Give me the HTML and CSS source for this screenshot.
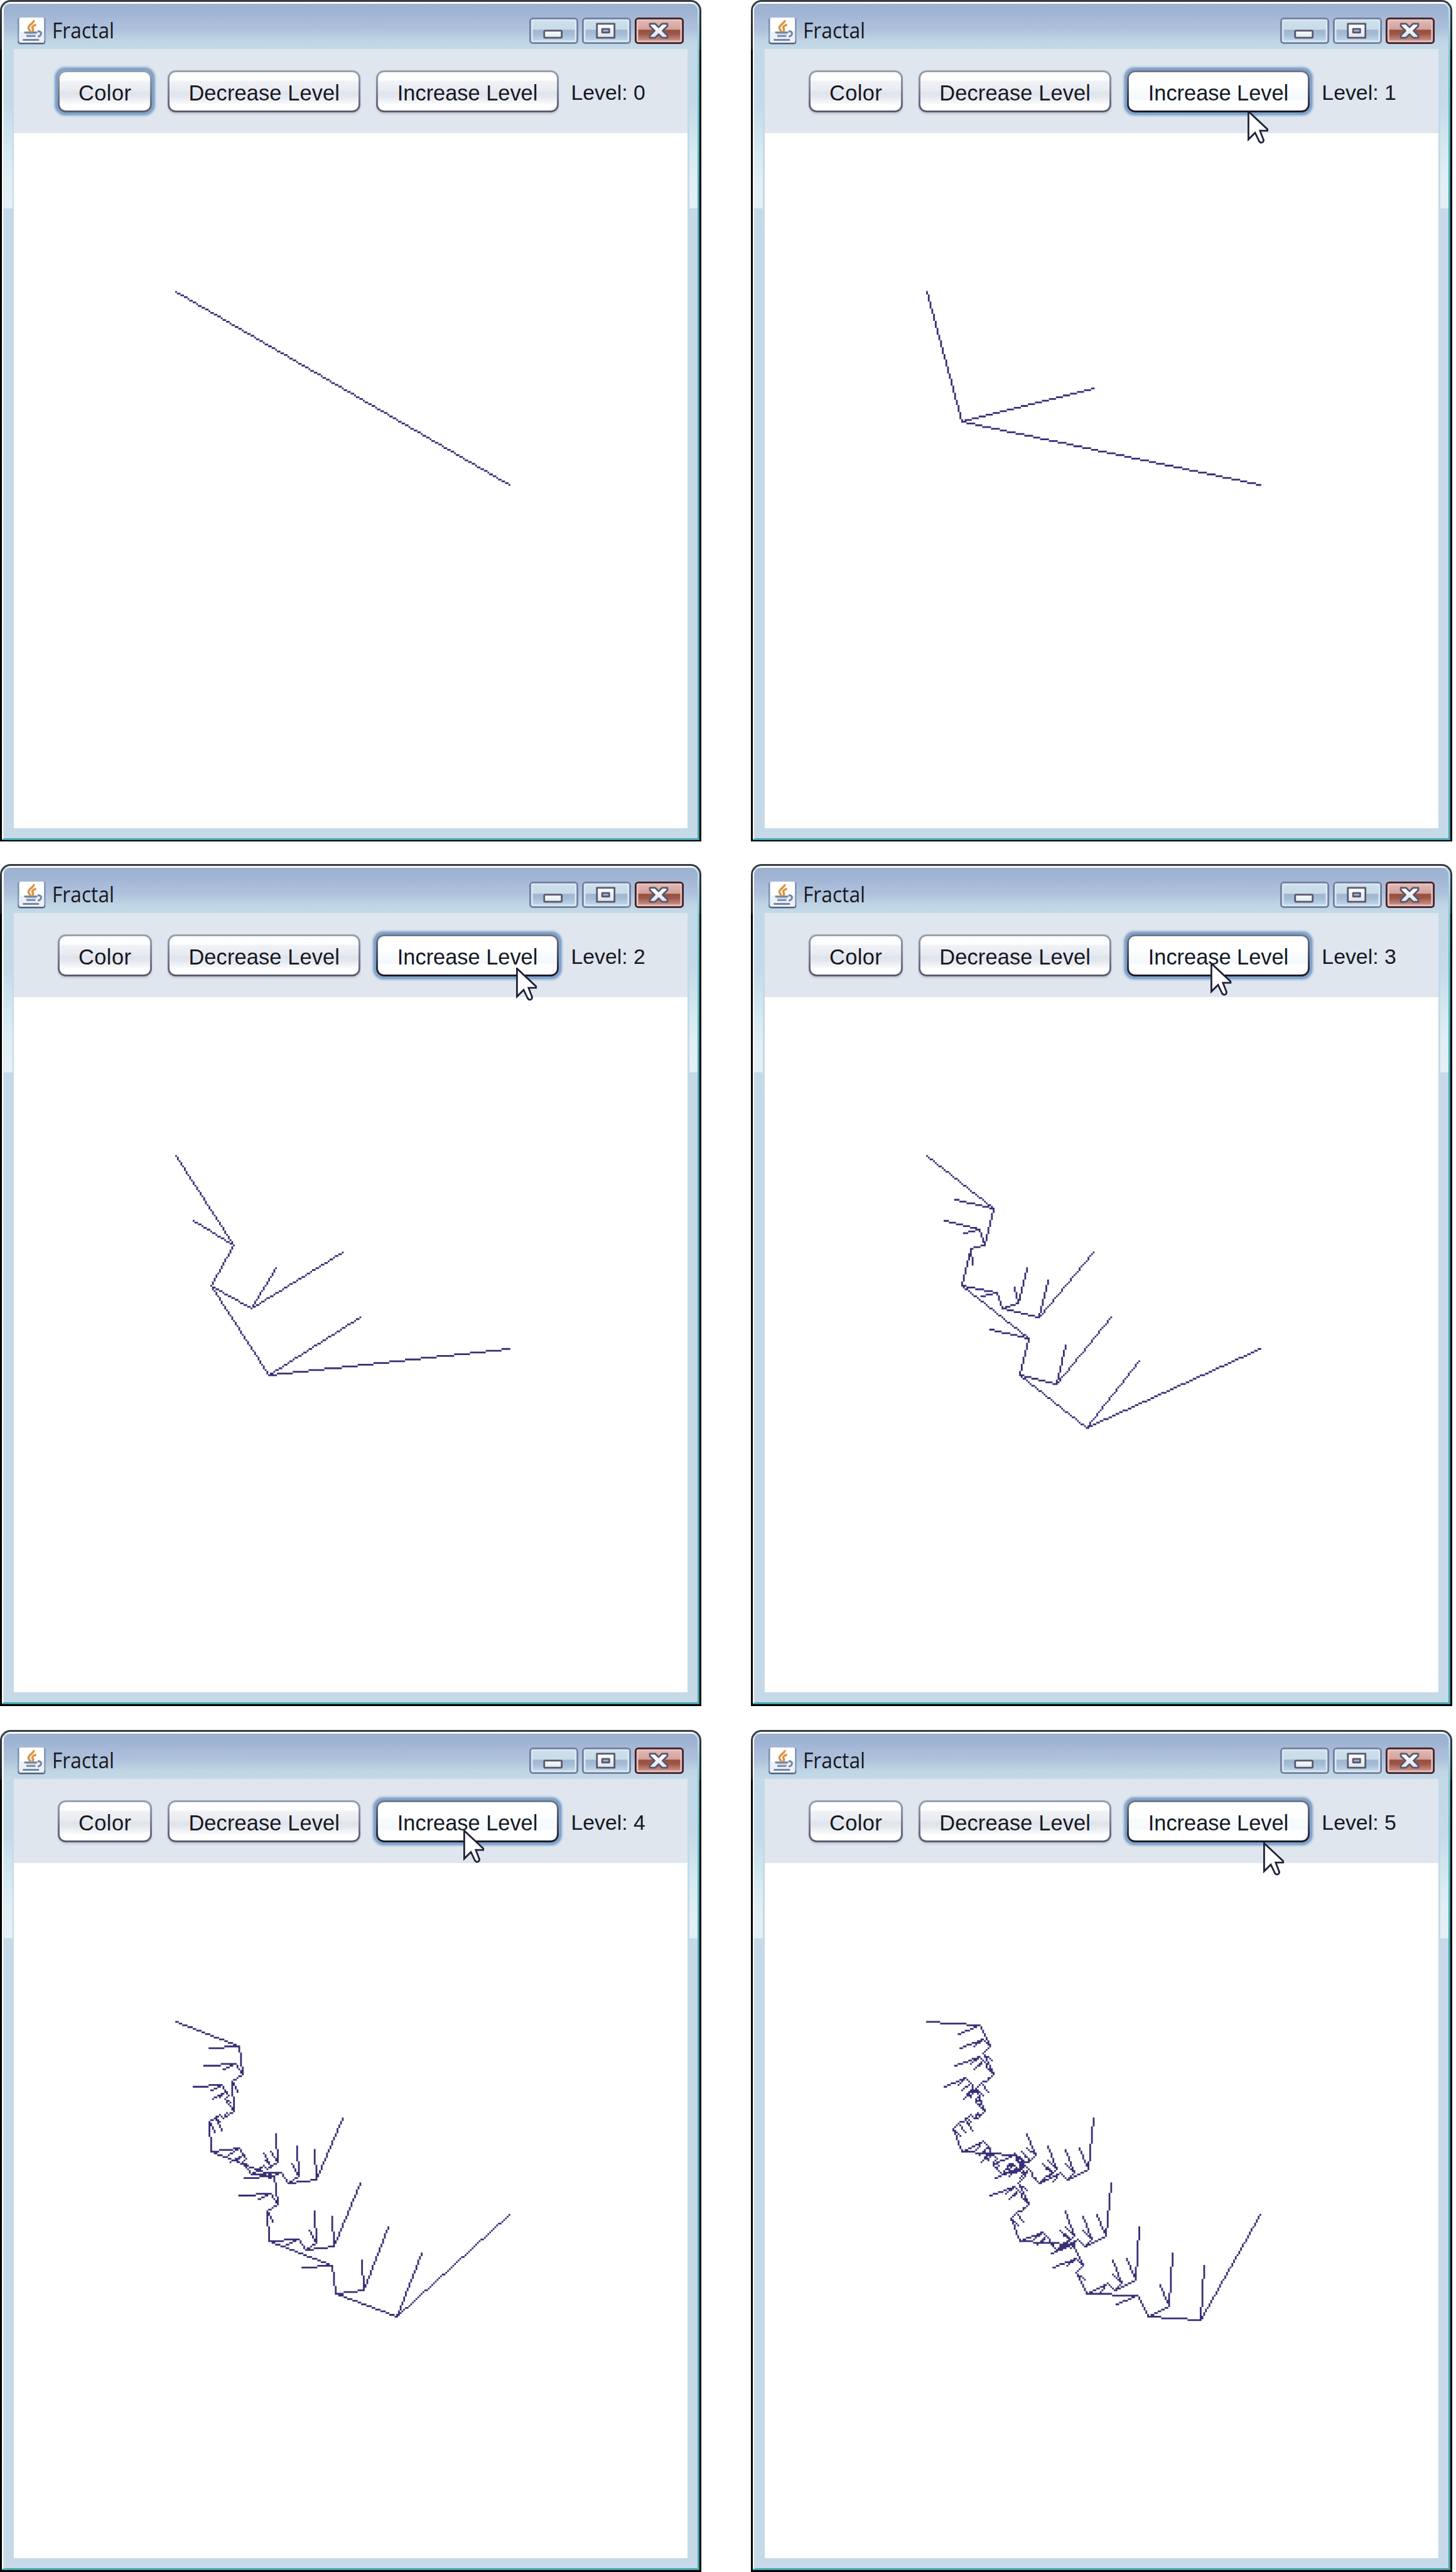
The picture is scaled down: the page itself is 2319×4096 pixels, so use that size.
FILE: index.html
```html
<!DOCTYPE html>
<html lang="en">
<head>
<meta charset="utf-8">
<title>Fractal</title>
<link rel="stylesheet" href="styles.css">
</head>
<body>
<svg class="defs" aria-hidden="true">
  <defs>
    <linearGradient id="glyph" x1="0" y1="0" x2="0" y2="1"><stop offset="0" stop-color="#fff"/><stop offset="1" stop-color="#dfe3ec"/></linearGradient>
  </defs>
  <symbol id="java" viewBox="0 0 16 16">
    <rect x="0" y="0.2" width="16" height="15" rx="1.2" fill="#6480a0" opacity=".75"/>
    <path d="M.4 13.2h15.200q-.2 1.900-1.500 1.900h-12.200q-1.300 0-1.500-1.900z" fill="#48617f"/>
    <rect x=".9" y="0" width="14.200" height="14.300" rx=".8" fill="#fff"/>
    <rect x=".9" y="8" width="14.200" height="6.300" rx=".8" fill="#eef0f7"/>
    <path d="M9.300 1.500c.3 1.600-3.200 2.600-3.100 4.400.1.900.8 1.300 1.100 2M10.600 4.100c-1.500.2-2.800 1.300-1.900 2.300.5.600 0 1.200-.5 1.500" fill="none" stroke="#dd9440" stroke-width="1.250"/>
    <path d="M3.800 8.500h7.400M5 10.500h5.200M3 12.700h9.200" fill="none" stroke="#7186a3" stroke-width="1"/>
    <path d="M4.800 9.300h5.800" stroke="#a9b6c8" stroke-width=".6"/>
    <path d="M11.400 7.900c2.600-.5 2.700 2.400.1 2.900" fill="none" stroke="#7186a3" stroke-width="1.100"/>
  </symbol>
  <symbol id="min" viewBox="0 0 28 15">
    <rect x="8.500" y="7.500" width="10" height="4" rx=".5" fill="url(#glyph)" stroke="#57586f"/>
  </symbol>
  <symbol id="max" viewBox="0 0 28 15">
    <path fill-rule="evenodd" d="M8.500 3.500h10v8h-10zM11.500 6.500v2h4v-2z" fill="url(#glyph)" stroke="#57586f" stroke-linejoin="round"/>
  </symbol>
  <symbol id="close" viewBox="0 0 28 15">
    <path d="M8.600 3.500h3l2 2 2-2h3v1.300l-2.700 2.700 2.700 2.700v1.300h-3l-2-2-2 2h-3v-1.300l2.700-2.700-2.700-2.700z" fill="url(#glyph)" stroke="#57586f" stroke-linejoin="round"/>
  </symbol>
  <symbol id="pointer" viewBox="0 0 12 19">
    <path d="M.5.500V16.500L4.300 12.700 6.600 17.500Q7.500 18.800 8.600 18 9.500 17.300 8.900 16.200L7.100 11.500H11.500V10.800z" fill="#fff" stroke="#20213a"/>
  </symbol>
</svg>
<main class="sheet" id="sheet"></main>
<template id="window">
  <section class="window">
    <div class="rim">
      <div class="frame">
        <header class="caption">
          <svg class="app-icon"><use href="#java"/></svg>
          <span class="title">Fractal</span>
          <span class="controls">
            <span class="control"><svg><use href="#min"/></svg></span>
            <span class="control"><svg><use href="#max"/></svg></span>
            <span class="control danger"><svg><use href="#close"/></svg></span>
          </span>
        </header>
        <div class="client">
          <div class="toolbar">
            <button class="btn color"><span>Color</span></button>
            <button class="btn decrease"><span>Decrease Level</span></button>
            <button class="btn increase"><span>Increase Level</span></button>
            <span class="level"></span>
          </div>
          <svg class="drawing" viewBox="8 0 384 396"><path/></svg>
        </div>
      </div>
    </div>
    <svg class="pointer"><use href="#pointer"/></svg>
  </section>
</template>
<script src="fractal.js"></script>
</body>
</html>
```
FILE: styles.css
```css
/* One tenth of a rem is one pixel of the drawn desktop. */
html { font-size: 27.9425px; }
body { margin: 0; background: #fff; font-family: "Liberation Sans", Arial, sans-serif; color: #17171f; overflow: hidden; }
.defs { position: absolute; width: 0; height: 0; }

.sheet {
  display: grid;
  grid-template-columns: 40rem 40rem;
  grid-template-rows: 49.250rem 49.350rem 48rem;
  column-gap: 2.8rem;
}

.window {
  position: relative;
  box-sizing: border-box;
  width: 39.960rem;
  height: 47.970rem;
  padding: .1rem;
  background: linear-gradient(#3a3c46, #1c1c24 2.8rem, #000 2.9rem);
  border-radius: .6rem .6rem 0 0;
}
.rim {
  box-sizing: border-box;
  height: 100%;
  padding: .1rem;
  border-radius: .5rem .5rem 0 0;
  background:
    linear-gradient(#fff, #fff) 0 0 / 39.600rem .1rem no-repeat,
    linear-gradient(#fff, #fff) 0 0 / .1rem 47.700rem no-repeat,
    linear-gradient(#bfe6ea, #7cc4cb 3rem, #45a5ad 12rem);
}
.frame {
  box-sizing: border-box;
  height: 100%;
  padding: 0 .56rem .57rem .6rem;
  border-radius: .4rem .4rem 0 0;
  background:
    linear-gradient(#9db1d0 0, #9fb3d2 .5rem, #a9bbd9 1rem, #adc0db 1.400rem, #bfd4e4 2.100rem, #c4dae8 2.600rem) 0 0 / 100% 2.600rem no-repeat,
    linear-gradient(#c2d9e7, #c4dae8 3.200rem, #d4eaf1 5.700rem, #e0eff5 7.400rem, #e5f0f6 9rem, #d8ebf1 9.100rem) 0 2.600rem / .5rem 9.100rem no-repeat,
    linear-gradient(#c2d9e7, #c4dae8 3.200rem, #d4eaf1 5.700rem, #e0eff5 7.400rem, #e5f0f6 9rem, #d8ebf1 9.100rem) 100% 2.600rem / .46rem 9.100rem no-repeat,
    #c5d9e8;
}

.caption { display: flex; align-items: flex-start; height: 2.600rem; box-sizing: border-box; padding: .8rem .23rem 0 .2rem; }
.app-icon { width: 1.600rem; height: 1.600rem; }
.title {
  margin-left: .36rem;
  font: 1.220rem/1.480rem "Open Sans", "Noto Sans", sans-serif;
  transform: scaleX(.93);
  transform-origin: 0 0;
}
.controls { display: flex; gap: .2rem; margin-left: auto; }
.control {
  width: 2.800rem;
  height: 1.500rem;
  border-radius: .2rem;
  background: linear-gradient(#cddfeb, #c8dce9 45%, #9fb5d3 47%, #a6bdd9 65%, #c5dbe8 92%);
  box-shadow: inset 0 0 0 .1rem #717e9f, inset 0 0 0 .2rem #dbe8f2;
}
.control svg { display: block; width: 2.800rem; height: 1.500rem; }
.danger {
  background: linear-gradient(#e5beb9, #d3a29c 45%, #98503f 47%, #9c5647 62%, #d29a92 92%);
  box-shadow: inset 0 0 0 .1rem #40202a, inset 0 0 0 .2rem #e6c1bd;
}

.client { height: 44.400rem; background: #fff; }
.toolbar { display: flex; align-items: flex-start; box-sizing: border-box; height: 4.800rem; padding: 1.200rem 0 0 2.500rem; background: #dfe6ee; }
.btn {
  box-sizing: border-box;
  height: 2.400rem;
  margin: 0 .9rem 0 0;
  padding: .1rem;
  border: 0;
  border-radius: .45rem;
  background: linear-gradient(#98a2b0, #7a8090 50%, #585b6e);
  box-shadow: 0 .1rem .1rem #c6cbd9;
  font: 1.230rem/2.370rem "Liberation Sans", Arial, sans-serif;
  color: inherit;
  white-space: nowrap;
}
.btn span {
  display: block;
  height: 2.200rem;
  border-radius: .35rem;
  background: linear-gradient(#fff 0, #fdfdfe 20%, #eff1f5 25%, #e9ecf2 45%, #dfe4ec 55%, #e4e8ef 64%, #f3f5f8 78%, #fff 86%);
}
.color { width: 5.370rem; letter-spacing: .015rem; }
.decrease { width: 10.980rem; letter-spacing: .005rem; }
.increase { width: 10.400rem; margin-right: .7rem; }
.focused { box-shadow: 0 0 .05rem .12rem #80a3ca, 0 0 .1rem .18rem #a9c1dc; }
.hovered { background: linear-gradient(#75778a, #4b4d60 50%, #181824); }
.hovered span { background: linear-gradient(#fff 40%, #f8fcfe 44%, #f3f9fd 70%, #fff 74%); }
.level { font-size: 1.210rem; line-height: 2.570rem; white-space: nowrap; }

.drawing { display: block; width: 38.400rem; height: 39.600rem; fill: #352f75; }
.pointer { position: absolute; width: 1.200rem; height: 1.900rem; }
```
FILE: fractal.js
```js
// One entry per window: fractal level and the pointer tip, in desktop pixels.
const shots = [
  { level: 0 },
  { level: 1, tip: [283, 63] },
  { level: 2, tip: [294, 59] },
  { level: 3, tip: [262, 56] },
  { level: 4, tip: [264, 57] },
  { level: 5, tip: [292, 64] }
];

const half = n => Math.trunc(n / 2);

// Collects the pixels of a line with integer stepping.
function plot(x0, y0, x1, y1, pixels) {
  const dx = Math.abs(x1 - x0), dy = -Math.abs(y1 - y0);
  const sx = x0 < x1 ? 1 : -1, sy = y0 < y1 ? 1 : -1;
  let err = dx + dy;
  for (;;) {
    pixels.add(y0 * 1000 + x0);
    if (x0 === x1 && y0 === y1) return;
    const e2 = 2 * err;
    if (e2 >= dy) { err += dy; x0 += sx; }
    if (e2 <= dx) { err += dx; y0 += sy; }
  }
}

function fractal(level, xA, yA, xB, yB, pixels) {
  if (level === 0) return plot(xA, yA, xB, yB, pixels);
  const xC = half(xA + xB), yC = half(yA + yB);
  const xD = xA + half(xC - xA) - half(yC - yA);
  const yD = yA + half(yC - yA) + half(xC - xA);
  fractal(level - 1, xD, yD, xA, yA, pixels);
  fractal(level - 1, xD, yD, xC, yC, pixels);
  fractal(level - 1, xD, yD, xB, yB, pixels);
}

// Joins neighbouring pixels of a row into one bar.
function toPath(pixels) {
  const keys = [...pixels].sort((a, b) => a - b);
  let d = "";
  for (let i = 0; i < keys.length;) {
    let n = 1;
    while (keys[i + n] === keys[i] + n) n++;
    d += `M${keys[i] % 1000} ${Math.floor(keys[i] / 1000)}h${n}v1h-${n}z`;
    i += n;
  }
  return d;
}

const sheet = document.getElementById("sheet");
const template = document.getElementById("window");
for (const { level, tip } of shots) {
  const view = template.content.cloneNode(true);
  view.querySelector(".level").textContent = "Level: " + level;
  const pixels = new Set();
  fractal(level, 100, 90, 290, 200, pixels);
  view.querySelector(".drawing path").setAttribute("d", toPath(pixels));
  const pointer = view.querySelector(".pointer");
  if (tip) {
    view.querySelector(".increase").classList.add("focused", "hovered");
    pointer.style.left = tip[0] / 10 + "rem";
    pointer.style.top = tip[1] / 10 + "rem";
  } else {
    view.querySelector(".color").classList.add("focused");
    pointer.remove();
  }
  sheet.append(view);
}
```
